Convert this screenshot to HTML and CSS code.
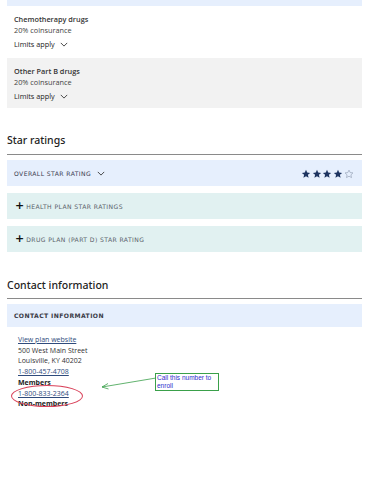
FILE: index.html
```html
<!DOCTYPE html>
<html lang="en">
<head>
<meta charset="utf-8">
<title>Plan details</title>
<link rel="stylesheet" href="styles.css">
</head>
<body>
<div class="page">
  <div class="band-top"></div>
  <div class="benefit">
    <div class="benefit-name">Chemotherapy drugs</div>
    <div class="benefit-cost">20% coinsurance</div>
    <div class="limits">Limits apply <svg class="chev" viewBox="0 0 10 6" width="8" height="5"><path d="M1 1 L5 5 L9 1" fill="none" stroke="#333" stroke-width="1.1"/></svg></div>
  </div>
  <div class="benefit alt">
    <div class="benefit-name">Other Part B drugs</div>
    <div class="benefit-cost">20% coinsurance</div>
    <div class="limits">Limits apply <svg class="chev" viewBox="0 0 10 6" width="8" height="5"><path d="M1 1 L5 5 L9 1" fill="none" stroke="#333" stroke-width="1.1"/></svg></div>
  </div>

  <h2 class="section-title first">Star ratings</h2>
  <div class="panel blue overall">
    <span class="caps">OVERALL STAR RATING <svg class="chev" viewBox="0 0 10 6" width="8" height="5"><path d="M1 1 L5 5 L9 1" fill="none" stroke="#333" stroke-width="1.1"/></svg></span>
    <span class="stars">
      <svg viewBox="0 0 24 24" width="10" height="10"><path d="M12 2 L14.9 8.6 L22 9.3 L16.6 14 L18.2 21 L12 17.3 L5.8 21 L7.4 14 L2 9.3 L9.1 8.6 Z" fill="#1d3461"/></svg>
      <svg viewBox="0 0 24 24" width="10" height="10"><path d="M12 2 L14.9 8.6 L22 9.3 L16.6 14 L18.2 21 L12 17.3 L5.8 21 L7.4 14 L2 9.3 L9.1 8.6 Z" fill="#1d3461"/></svg>
      <svg viewBox="0 0 24 24" width="10" height="10"><path d="M12 2 L14.9 8.6 L22 9.3 L16.6 14 L18.2 21 L12 17.3 L5.8 21 L7.4 14 L2 9.3 L9.1 8.6 Z" fill="#1d3461"/></svg>
      <svg viewBox="0 0 24 24" width="10" height="10"><path d="M12 2 L14.9 8.6 L22 9.3 L16.6 14 L18.2 21 L12 17.3 L5.8 21 L7.4 14 L2 9.3 L9.1 8.6 Z" fill="#1d3461"/></svg>
      <svg viewBox="0 0 24 24" width="10" height="10"><path d="M12 2.8 L14.9 8.6 L21.5 9.3 L16.6 14 L18 20.6 L12 17.3 L6 20.6 L7.4 14 L2.5 9.3 L9.1 8.6 Z" fill="none" stroke="#8a96aa" stroke-width="1.4"/></svg>
    </span>
  </div>
  <div class="panel mint"><span class="plus">+</span><span class="caps light">HEALTH PLAN STAR RATINGS</span></div>
  <div class="panel mint"><span class="plus">+</span><span class="caps light">DRUG PLAN (PART D) STAR RATING</span></div>

  <h2 class="section-title second">Contact information</h2>
  <div class="panel blue contact-head"><span class="caps bold">CONTACT INFORMATION</span></div>
  <div class="contact">
    <a class="link" href="#">View plan website</a>
    <div>500 West Main Street</div>
    <div>Louisville, KY 40202</div>
    <a class="link" href="#">1-800-457-4708</a>
    <div class="strong">Members</div>
    <a class="link circled" href="#">1-800-833-2364</a>
    <div class="strong">Non-members</div>
    <div class="note">Call this number to enroll</div>
    <svg class="arrow" width="60" height="14" viewBox="0 0 60 14"><path d="M57 2 L3 11 M3 11 L9 7.5 M3 11 L9.5 13" fill="none" stroke="#3aa04a" stroke-width="0.8"/></svg>
  </div>
</div>
</body>
</html>
```
FILE: styles.css
```css
* { box-sizing: border-box; }
body {
  margin: 0;
  background: #fff;
  font-family: "Open Sans", "Noto Sans", sans-serif;
  color: #222;
}
.page {
  width: 370px;
  padding: 0 8px 0 7px;
}
.band-top {
  height: 6px;
  background: #e6effd;
}
.benefit {
  padding: 8px 7px 7px;
  height: 52px;
  font-size: 7.3px;
  line-height: 11px;
}
.benefit.alt {
  background: #f2f2f2;
  height: 50px;
}
.benefit-name { font-weight: 600; color: #333; }
.benefit-cost { color: #444; }
.limits {
  margin-top: 3px;
  font-weight: 500;
  color: #222;
  display: flex;
  align-items: center;
  gap: 5px;
}
.chev { display: inline-block; }
.section-title {
  margin: 0;
  font-family: "Noto Sans", "Open Sans", sans-serif;
  font-weight: 500;
  font-size: 10.5px;
  color: #222;
  padding: 20px 0 7px;
  border-bottom: 1px solid #8a8a8a;
  margin-bottom: 5px;
  line-height: 14px;
}
.section-title.first { padding-top: 25px; }
.section-title.second { padding-top: 19px; padding-bottom: 6px; }
.panel {
  display: flex;
  align-items: center;
  padding: 0 8px 0 7px;
  height: 26px;
  margin-bottom: 7px;
}
.panel.blue { background: #e6effd; }
.panel.mint { background: #e1f1f1; height: 26px; }
.overall { justify-content: space-between; height: 26px; }
.caps {
  font-family: "DejaVu Sans", sans-serif;
  font-size: 6.1px;
  letter-spacing: 0.4px;
  color: #3b3b50;
  display: flex;
  align-items: center;
  gap: 6px;
}
.caps.light { color: #5a5f6a; }
.caps.bold { font-weight: bold; color: #3b3b47; }
.plus {
  font-family: "DejaVu Sans", sans-serif;
  font-weight: bold;
  font-size: 11px;
  line-height: 10px;
  color: #111;
  margin-right: 2px;
  margin-left: 1px;
}
.stars { display: flex; gap: 0.8px; margin-top: 2px; }
.contact-head { height: 23px; margin-bottom: 8px; }
.contact {
  position: relative;
  padding-left: 11px;
  font-size: 7px;
  line-height: 10.7px;
  color: #333;
  display: flex;
  flex-direction: column;
  align-items: flex-start;
}
.link { color: #2f4b7c; text-decoration: underline; }
.strong { font-weight: 700; color: #222; }
.circled { position: relative; }
.circled::after {
  content: "";
  position: absolute;
  left: -7px;
  top: -4px;
  width: 70px;
  height: 20px;
  border: 0.8px solid #d9425a;
  border-radius: 50%;
}
.note {
  position: absolute;
  left: 148px;
  top: 38px;
  width: 64px;
  height: 18px;
  border: 0.8px solid #3aa04a;
  color: #2e2ecc;
  font-family: "Liberation Sans", sans-serif;
  font-size: 6.5px;
  line-height: 8px;
  padding: 0 1px;
}
.arrow {
  position: absolute;
  left: 92px;
  top: 41px;
}
```
